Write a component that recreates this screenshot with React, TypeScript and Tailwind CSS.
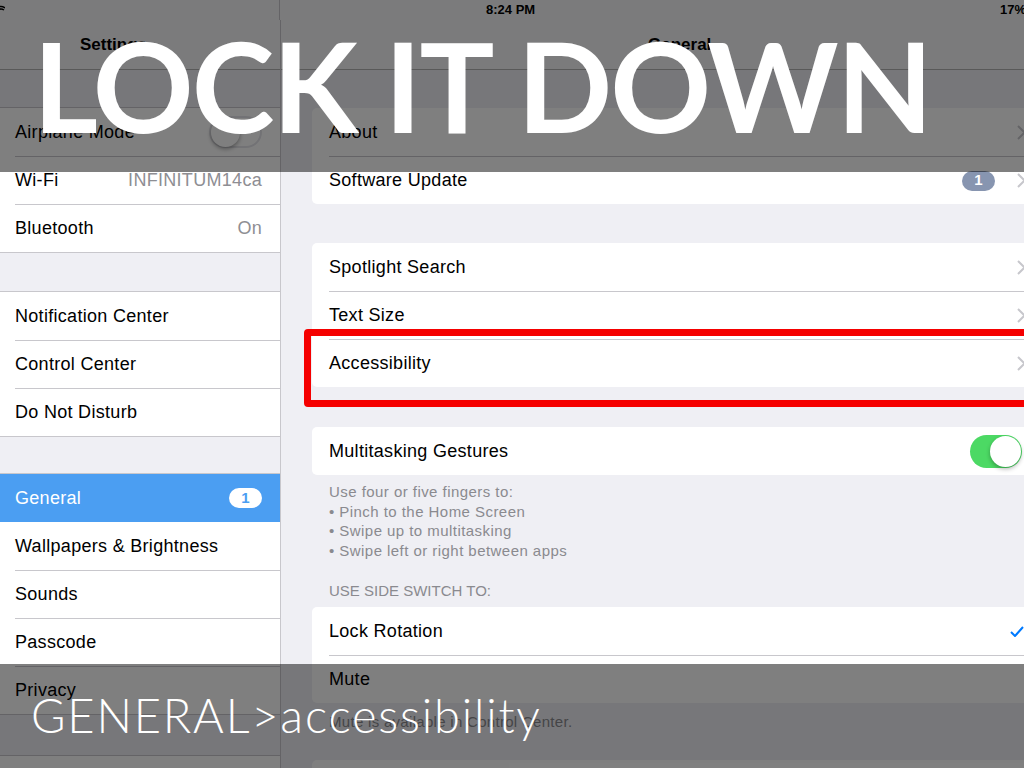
import React from 'react';

const font = "font-['Liberation_Sans',Arial,sans-serif]";

const Chevron = () => (
  <svg width="9" height="15" viewBox="0 0 9 15" className="shrink-0">
    <path d="M1 1l6.5 6.5L1 14" fill="none" stroke="#c7c7cc" strokeWidth="2" />
  </svg>
);

const Toggle = ({ on }: { on: boolean }) =>
  on ? (
    <div className="flex h-[33px] w-[52px] items-center justify-end rounded-full bg-[#4cd964] p-[1px]">
      <div className="h-[31px] w-[31px] rounded-full bg-white shadow-[0_2px_4px_rgba(0,0,0,0.3)]" />
    </div>
  ) : (
    <div className="flex h-[32px] w-[53px] items-center rounded-full border-2 border-[#e5e5ea] bg-white">
      <div className="h-[29px] w-[29px] rounded-full bg-white shadow-[0_2px_4px_rgba(0,0,0,0.35)]" />
    </div>
  );

type Row = { label: string; value?: string; toggle?: boolean; badge?: string; active?: boolean };

const SideGroup = ({ rows }: { rows: Row[] }) => (
  <div className="border-y border-[#c8c7cc] bg-white">
    {rows.map((r, i) => (
      <div key={r.label} className={r.active ? 'bg-[#4b9ef2]' : ''}>
        <div
          className={`ml-[15px] flex h-[48px] items-center pr-[18px] ${
            i > 0 && !r.active && !rows[i - 1].active ? 'border-t border-[#c8c7cc]' : ''
          }`}
        >
          <span className={`flex-1 text-[18px] tracking-[0.3px] ${r.active ? 'text-white' : 'text-black'}`}>
            {r.label}
          </span>
          {r.value && <span className="text-[18px] tracking-[0.3px] text-[#8e8e93]">{r.value}</span>}
          {r.toggle && <Toggle on={false} />}
          {r.badge && (
            <span className="flex h-[20px] w-[33px] items-center justify-center rounded-full bg-white text-[15px] font-bold text-[#4b9ef2]">
              {r.badge}
            </span>
          )}
        </div>
      </div>
    ))}
  </div>
);

type CardRow = { label: string; chevron?: boolean; badge?: string; toggle?: boolean; check?: boolean };

const Card = ({ rows }: { rows: CardRow[] }) => (
  <div className="mr-[-19px] ml-[31px] overflow-hidden rounded-[5px] bg-white">
    {rows.map((r, i) => (
      <div key={r.label} className="ml-[17px]">
        <div className={`flex h-[48px] items-center pr-[17px] ${i > 0 ? 'border-t border-[#c8c7cc]' : ''}`}>
          <span className="flex-1 text-[18px] tracking-[0.3px] text-black">{r.label}</span>
          {r.badge && (
            <span className="mr-[22px] flex h-[20px] w-[33px] items-center justify-center rounded-full bg-[#8795b0] text-[15px] font-bold text-white">
              {r.badge}
            </span>
          )}
          {r.chevron && <Chevron />}
          {r.toggle && (
            <div className="mr-[4px]">
              <Toggle on />
            </div>
          )}
          {r.check && (
            <svg width="14" height="11" viewBox="0 0 14 11" className="mr-[2px]">
              <path d="M1 6l4 4 8-9" fill="none" stroke="#007aff" strokeWidth="2" />
            </svg>
          )}
        </div>
      </div>
    ))}
  </div>
);

export default function App() {
  return (
    <div className={`relative h-[768px] w-[1024px] overflow-hidden bg-[#efeff4] ${font}`}>
      {/* status bar */}
      <div className="flex h-[20px] items-center bg-[#f7f7f8] text-[13px] font-bold text-black">
        <div className="h-full w-[280px] border-r border-[#c8c7cc]">
          <svg width="8" height="10" viewBox="0 0 8 10" className="mt-[4px] ml-[-3px]">
            <path d="M0 4q4-3 8 0M1 6q3-2 6 0" fill="none" stroke="#000" strokeWidth="1.5" />
          </svg>
        </div>
        <div className="flex flex-1 items-center">
          <span className="ml-[206px]">8:24 PM</span>
          <span className="mr-[-2px] ml-auto">17%</span>
        </div>
      </div>

      <div className="flex h-[748px]">
        {/* left column */}
        <aside className="w-[281px] shrink-0 border-r border-[#c8c7cc]">
          <div className="flex h-[50px] items-center border-b border-[#b2b2b2] bg-[#f7f7f8] pl-[80px] text-[17px] font-bold">
            Settings
          </div>
          <div className="mt-[37px]">
            <SideGroup
              rows={[
                { label: 'Airplane Mode', toggle: true },
                { label: 'Wi-Fi', value: 'INFINITUM14ca' },
                { label: 'Bluetooth', value: 'On' },
              ]}
            />
          </div>
          <div className="mt-[38px]">
            <SideGroup
              rows={[{ label: 'Notification Center' }, { label: 'Control Center' }, { label: 'Do Not Disturb' }]}
            />
          </div>
          <div className="mt-[36px]">
            <SideGroup
              rows={[
                { label: 'General', badge: '1', active: true },
                { label: 'Wallpapers & Brightness' },
                { label: 'Sounds' },
                { label: 'Passcode' },
                { label: 'Privacy' },
              ]}
            />
          </div>
          <div className="mt-[40px] h-[48px] border-t border-[#c8c7cc] bg-white" />
        </aside>

        {/* right column */}
        <main className="flex-1">
          <div className="flex h-[50px] items-center border-b border-[#b2b2b2] bg-[#f7f7f8] pl-[367px] text-[17px] font-bold">
            General
          </div>
          <div className="mt-[38px]">
            <Card rows={[{ label: 'About', chevron: true }, { label: 'Software Update', badge: '1', chevron: true }]} />
          </div>
          <div className="mt-[39px]">
            <Card
              rows={[
                { label: 'Spotlight Search', chevron: true },
                { label: 'Text Size', chevron: true },
                { label: 'Accessibility', chevron: true },
              ]}
            />
          </div>
          <div className="mt-[40px]">
            <Card rows={[{ label: 'Multitasking Gestures', toggle: true }]} />
          </div>
          <div className="mt-[7px] ml-[48px] text-[15px] leading-[19.7px] tracking-[0.45px] text-[#8a8a8f]">
            <p>Use four or five fingers to:</p>
            <p>• Pinch to the Home Screen</p>
            <p>• Swipe up to multitasking</p>
            <p>• Swipe left or right between apps</p>
          </div>
          <div className="mt-[19px] mb-[5px] ml-[48px] text-[15px] uppercase text-[#8a8a8f]">Use side switch to:</div>
          <Card rows={[{ label: 'Lock Rotation', check: true }, { label: 'Mute' }]} />
          <div className="mt-[8px] ml-[48px] text-[15px] tracking-[0.3px] text-[#8a8a8f]">
            Mute is available in Control Center.
          </div>
          <div className="mt-[26px]">
            <Card rows={[{ label: ' ' }]} />
          </div>
        </main>
      </div>

      {/* red highlight around Accessibility */}
      <div className="absolute top-[329px] left-[304px] h-[78px] w-[740px] rounded-[4px] border-[7px] border-[#f50000]" />

      {/* title band */}
      <div className="absolute inset-x-0 top-0 flex h-[172px] items-center bg-black/50 pl-[33px]">
        <h1 className="mt-[-2px] font-['Lato',sans-serif] text-[125px] leading-none font-bold tracking-[-2px] text-white">
          LOCK IT DOWN
        </h1>
      </div>

      {/* caption band */}
      <div className="absolute inset-x-0 top-[664px] flex h-[104px] items-center bg-black/50 pl-[31px]">
        <p className="mt-[-2px] font-['Lato',sans-serif] text-[47px] leading-none font-light tracking-[1.8px] text-white">
          GENERAL&gt;accessibility
        </p>
      </div>
    </div>
  );
}
